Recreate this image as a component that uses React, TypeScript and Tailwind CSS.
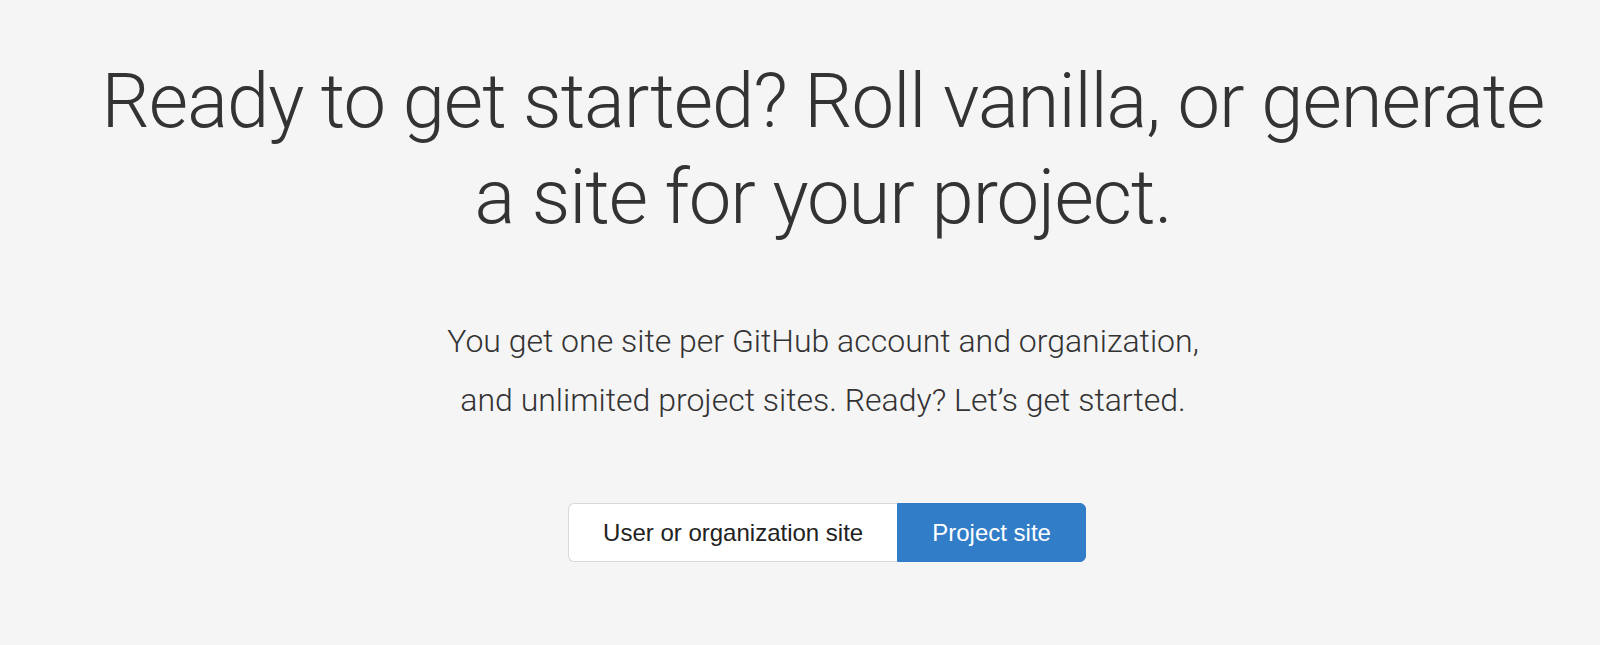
export default function App() {
  return (
    <div className="min-h-[645px] bg-[#f5f5f5] pl-[46px] text-[#333] font-['Roboto',sans-serif]">
      <div className="flex flex-col items-center pt-[53px]">
        <h1 className="text-center text-[76px] font-light leading-[96px] tracking-[-1px]">
          Ready to get started? Roll vanilla, or generate
          <br />
          a site for your project.
        </h1>
        <p className="mt-[67px] text-center text-[32px] font-light leading-[59px]">
          You get one site per GitHub account and organization,
          <br />
          and unlimited project sites. Ready? Let’s get started.
        </p>
        <div className="mt-[73px] ml-[8px] flex font-['Liberation_Sans',Arial,sans-serif] text-[24px]">
          <button className="h-[59px] rounded-l-[6px] border border-r-0 border-[#d9d9d9] bg-white px-[34px] text-[#222]">
            User or organization site
          </button>
          <button className="h-[59px] rounded-r-[6px] border border-[#327cc7] bg-[#327dc8] px-[34px] text-white">
            Project site
          </button>
        </div>
      </div>
    </div>
  );
}
